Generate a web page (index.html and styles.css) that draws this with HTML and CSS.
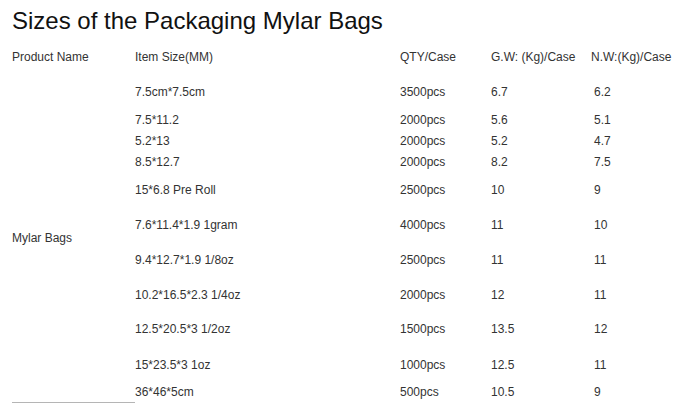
FILE: index.html
```html
<!DOCTYPE html>
<html lang="en">
<head>
<meta charset="utf-8">
<title>Sizes of the Packaging Mylar Bags</title>
<link rel="stylesheet" href="styles.css">
</head>
<body>
<div class="page">
  <h1 class="title">Sizes of the Packaging Mylar Bags</h1>
  <table class="sizes">
    <colgroup>
      <col class="c-name"><col class="c-size"><col class="c-qty"><col class="c-gw"><col class="c-nw">
    </colgroup>
    <thead>
      <tr class="head">
        <th>Product Name</th><th>Item Size(MM)</th><th>QTY/Case</th><th>G.W: (Kg)/Case</th><th>N.W:(Kg)/Case</th>
      </tr>
    </thead>
    <tbody>
      <tr class="h36">
        <td class="name" rowspan="11">Mylar Bags</td>
        <td>7.5cm*7.5cm</td><td>3500pcs</td><td>6.7</td><td class="nw">6.2</td>
      </tr>
      <tr class="h20"><td>7.5*11.2</td><td>2000pcs</td><td>5.6</td><td class="nw">5.1</td></tr>
      <tr class="h22"><td>5.2*13</td><td>2000pcs</td><td>5.2</td><td class="nw">4.7</td></tr>
      <tr class="h19"><td>8.5*12.7</td><td>2000pcs</td><td>8.2</td><td class="nw">7.5</td></tr>
      <tr class="h37"><td>15*6.8 Pre Roll</td><td>2500pcs</td><td>10</td><td class="nw">9</td></tr>
      <tr class="h34"><td>7.6*11.4*1.9 1gram</td><td>4000pcs</td><td>11</td><td class="nw">10</td></tr>
      <tr class="h36"><td>9.4*12.7*1.9 1/8oz</td><td>2500pcs</td><td>11</td><td class="nw">11</td></tr>
      <tr class="h33"><td>10.2*16.5*2.3 1/4oz</td><td>2000pcs</td><td>12</td><td class="nw">11</td></tr>
      <tr class="h36"><td>12.5*20.5*3 1/2oz</td><td>1500pcs</td><td>13.5</td><td class="nw">12</td></tr>
      <tr class="h35"><td>15*23.5*3 1oz</td><td>1000pcs</td><td>12.5</td><td class="nw">11</td></tr>
      <tr class="h20"><td>36*46*5cm</td><td>500pcs</td><td>10.5</td><td class="nw">9</td></tr>
    </tbody>
  </table>
</div>
</body>
</html>
```
FILE: styles.css
```css
html, body {
  margin: 0;
  padding: 0;
  background: #ffffff;
}

.page {
  padding-left: 12px;
  font-family: "Liberation Sans", Arial, sans-serif;
  color: #333333;
}

.title {
  margin: 7px 0 4px 0;
  font-size: 24px;
  line-height: 28px;
  font-weight: normal;
  color: #111111;
}

.sizes {
  border-collapse: collapse;
  border-spacing: 0;
  table-layout: fixed;
  width: 671px;
  font-size: 12px;
  line-height: 14px;
}

.c-name { width: 123px; }
.c-size { width: 265px; }
.c-qty { width: 91px; }
.c-gw { width: 100px; }
.c-nw { width: 92px; }

.sizes th,
.sizes td {
  padding: 0;
  text-align: left;
  vertical-align: middle;
  font-weight: normal;
  white-space: nowrap;
}

.head { height: 35px; }

.sizes td.name {
  border-bottom: 1px solid #b5b5b5;
}

.sizes td.nw { padding-left: 3px; }

.h19 { height: 19px; }
.h20 { height: 20px; }
.h22 { height: 22px; }
.h33 { height: 33px; }
.h34 { height: 34px; }
.h35 { height: 35px; }
.h36 { height: 36px; }
.h37 { height: 37px; }
```
